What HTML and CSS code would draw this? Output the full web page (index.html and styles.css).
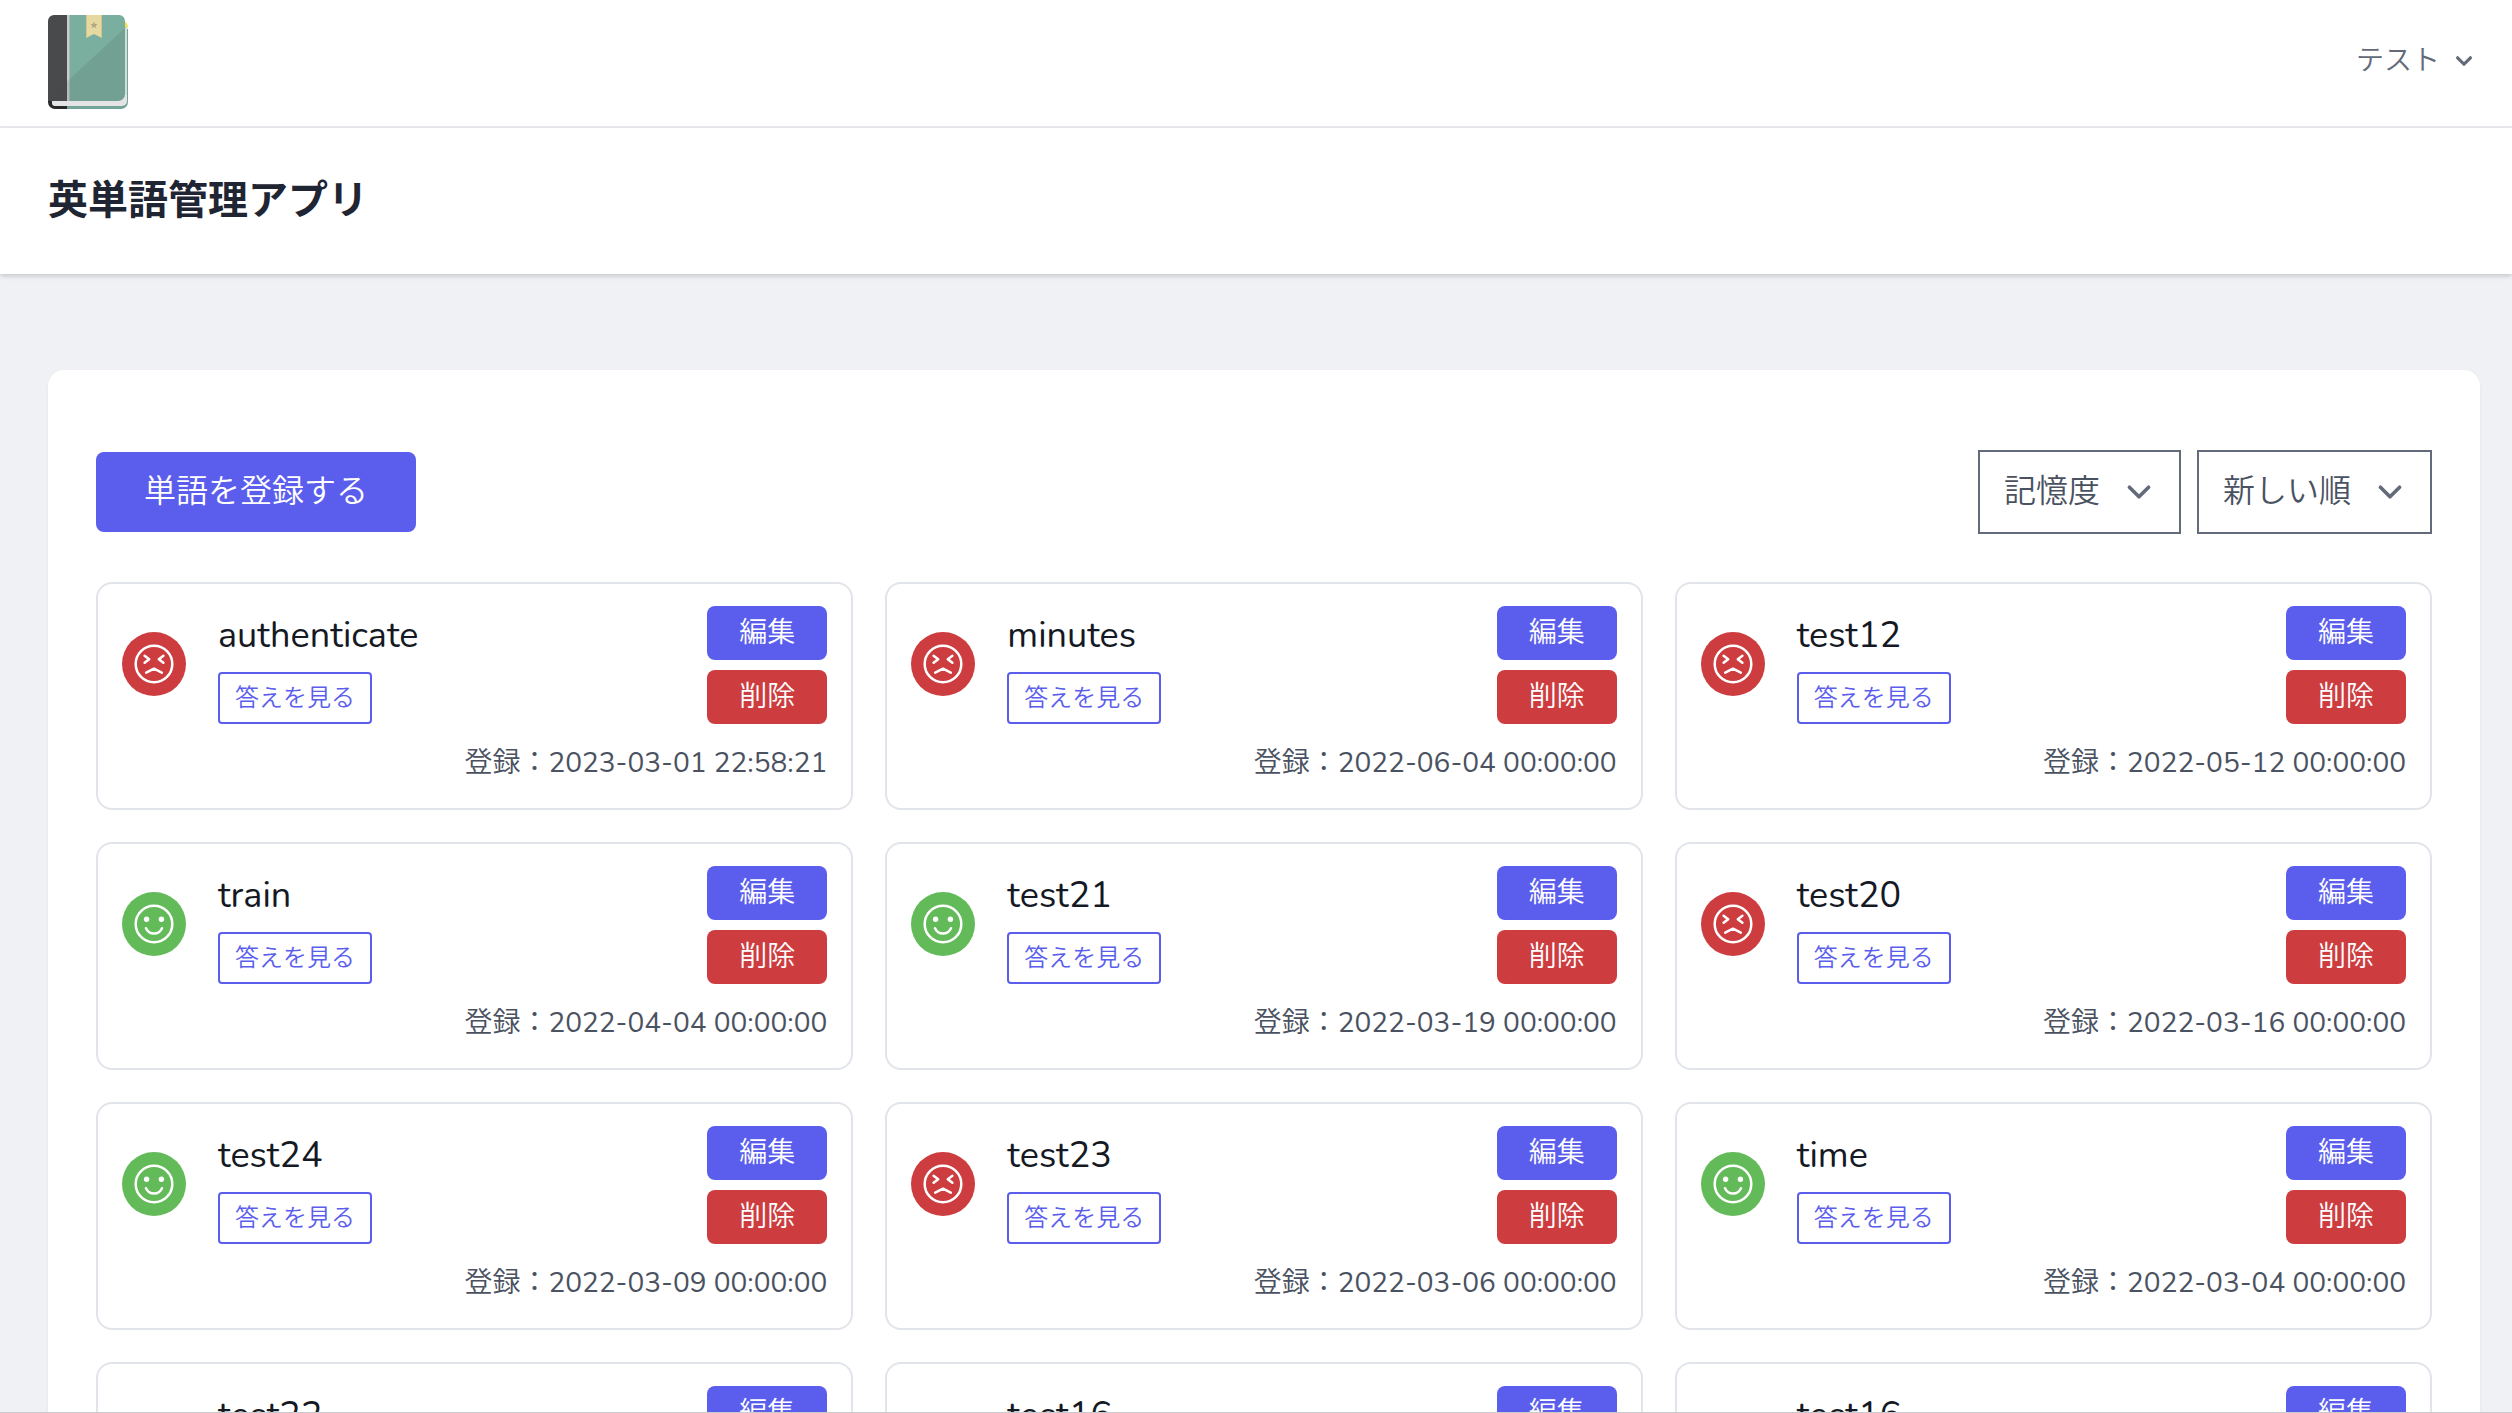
FILE: index.html
```html
<!DOCTYPE html>
<html lang="ja">
<head>
<meta charset="utf-8">
<meta name="viewport" content="width=device-width, initial-scale=1">
<title>英単語管理アプリ</title>
<link rel="stylesheet" href="styles.css">
</head>
<body>
<svg class="sprite" aria-hidden="true">
  <symbol id="face-bad" viewBox="0 0 64 64">
    <circle cx="32" cy="32" r="32" fill="#cd3d3f"/>
    <g fill="none" stroke="#fff" stroke-width="2.5" stroke-linecap="round" stroke-linejoin="round">
      <circle cx="32" cy="32" r="18.3"/>
      <path d="M22.6 23.8l4.6 3.4-4.6 3.6M41.4 23.8l-4.6 3.4 4.6 3.6M24.2 40.6l7.8-3.9 7.8 3.9"/>
    </g>
  </symbol>
  <symbol id="face-good" viewBox="0 0 64 64">
    <circle cx="32" cy="32" r="32" fill="#62bb58"/>
    <g fill="none" stroke="#fff" stroke-width="2.5" stroke-linecap="round">
      <circle cx="32" cy="32" r="18.3"/>
      <path d="M24 36.200c1.600 3.600 4.600 5.400 8 5.400s6.400-1.800 8-5.400"/>
    </g>
    <circle cx="24.600" cy="27.200" r="2.700" fill="#fff"/>
    <circle cx="39.400" cy="27.200" r="2.700" fill="#fff"/>
  </symbol>
  <symbol id="chevron" viewBox="0 0 20 20">
    <path d="M6 8l4 4 4-4" fill="none" stroke="#636a7a" stroke-width="1.5" stroke-linecap="round" stroke-linejoin="round"/>
  </symbol>
</svg>

<nav class="nav">
  <a class="logo" href="#" aria-label="ホーム">
    <svg viewBox="0 0 80 94" width="80" height="94" aria-hidden="true">
      <path d="M76 6q4 2 4 7l-3 1z" fill="#f0e34b"/>
      <path d="M19 14h61v73a7 7 0 0 1-7 7H19z" fill="#74a497"/>
      <path d="M0 80h19v14H7a7 7 0 0 1-7-7z" fill="#282829"/>
      <path d="M4 84V60h75v26a5 5 0 0 1-5 5H7a3 3 0 0 1-3-3z" fill="#e4e4e4"/>
      <path d="M77 12h2v68h-2z" fill="#d3dedb"/>
      <path d="M6 0h13v86H0V6a6 6 0 0 1 6-6z" fill="#494a4c"/>
      <path d="M19 0h3v86h-3z" fill="#cbcbc9"/>
      <path d="M21.500 0H71a6 6 0 0 1 6 6v73a7 7 0 0 1-7 7H21.500z" fill="#7aae9f"/>
      <path d="M77 13v66a7 7 0 0 1-7 7H0v-2z" fill="#414242" fill-opacity=".13"/>
      <path d="M38 0h16v23l-8-4-8 4z" fill="#e5d9a1"/>
      <path d="M38 0h1v22.500l-1 .5zM53 0h1v23l-1-.5z" fill="#cfc58d"/>
      <path d="M46 6.500l1 2.500h2.600l-2 1.700.7 2.600-2.300-1.500-2.300 1.500.7-2.600-2-1.700H45z" fill="#aea583"/>
    </svg>
  </a>
  <button class="user" type="button"><span>テスト</span>
    <svg viewBox="0 0 20 20" width="32" height="32" aria-hidden="true"><path fill="#636a7a" d="M5.293 7.293a1 1 0 011.414 0L10 10.586l3.293-3.293a1 1 0 111.414 1.414l-4 4a1 1 0 01-1.414 0l-4-4a1 1 0 010-1.414z"/></svg>
  </button>
</nav>

<header class="header"><h1>英単語管理アプリ</h1></header>

<main class="main">
  <section class="panel">
    <div class="toolbar">
      <button class="add" type="button">単語を登録する</button>
      <div class="filters">
        <div class="picker">
          <select aria-label="記憶度"><option>記憶度</option></select>
          <svg aria-hidden="true"><use href="#chevron"/></svg>
        </div>
        <div class="picker">
          <select aria-label="並び順"><option>新しい順</option></select>
          <svg aria-hidden="true"><use href="#chevron"/></svg>
        </div>
      </div>
    </div>

    <div class="grid">
      <article class="card">
        <div class="row">
          <svg class="face" role="img" aria-label="苦手"><use href="#face-bad"/></svg>
          <div class="word"><h2>authenticate</h2><button class="answer" type="button">答えを見る</button></div>
          <div class="actions"><button class="edit" type="button">編集</button><button class="delete" type="button">削除</button></div>
        </div>
        <p class="date">登録：<time>2023-03-01 22:58:21</time></p>
      </article>
      <article class="card">
        <div class="row">
          <svg class="face" role="img" aria-label="苦手"><use href="#face-bad"/></svg>
          <div class="word"><h2>minutes</h2><button class="answer" type="button">答えを見る</button></div>
          <div class="actions"><button class="edit" type="button">編集</button><button class="delete" type="button">削除</button></div>
        </div>
        <p class="date">登録：<time>2022-06-04 00:00:00</time></p>
      </article>
      <article class="card">
        <div class="row">
          <svg class="face" role="img" aria-label="苦手"><use href="#face-bad"/></svg>
          <div class="word"><h2>test12</h2><button class="answer" type="button">答えを見る</button></div>
          <div class="actions"><button class="edit" type="button">編集</button><button class="delete" type="button">削除</button></div>
        </div>
        <p class="date">登録：<time>2022-05-12 00:00:00</time></p>
      </article>
      <article class="card">
        <div class="row">
          <svg class="face" role="img" aria-label="得意"><use href="#face-good"/></svg>
          <div class="word"><h2>train</h2><button class="answer" type="button">答えを見る</button></div>
          <div class="actions"><button class="edit" type="button">編集</button><button class="delete" type="button">削除</button></div>
        </div>
        <p class="date">登録：<time>2022-04-04 00:00:00</time></p>
      </article>
      <article class="card">
        <div class="row">
          <svg class="face" role="img" aria-label="得意"><use href="#face-good"/></svg>
          <div class="word"><h2>test21</h2><button class="answer" type="button">答えを見る</button></div>
          <div class="actions"><button class="edit" type="button">編集</button><button class="delete" type="button">削除</button></div>
        </div>
        <p class="date">登録：<time>2022-03-19 00:00:00</time></p>
      </article>
      <article class="card">
        <div class="row">
          <svg class="face" role="img" aria-label="苦手"><use href="#face-bad"/></svg>
          <div class="word"><h2>test20</h2><button class="answer" type="button">答えを見る</button></div>
          <div class="actions"><button class="edit" type="button">編集</button><button class="delete" type="button">削除</button></div>
        </div>
        <p class="date">登録：<time>2022-03-16 00:00:00</time></p>
      </article>
      <article class="card">
        <div class="row">
          <svg class="face" role="img" aria-label="得意"><use href="#face-good"/></svg>
          <div class="word"><h2>test24</h2><button class="answer" type="button">答えを見る</button></div>
          <div class="actions"><button class="edit" type="button">編集</button><button class="delete" type="button">削除</button></div>
        </div>
        <p class="date">登録：<time>2022-03-09 00:00:00</time></p>
      </article>
      <article class="card">
        <div class="row">
          <svg class="face" role="img" aria-label="苦手"><use href="#face-bad"/></svg>
          <div class="word"><h2>test23</h2><button class="answer" type="button">答えを見る</button></div>
          <div class="actions"><button class="edit" type="button">編集</button><button class="delete" type="button">削除</button></div>
        </div>
        <p class="date">登録：<time>2022-03-06 00:00:00</time></p>
      </article>
      <article class="card">
        <div class="row">
          <svg class="face" role="img" aria-label="得意"><use href="#face-good"/></svg>
          <div class="word"><h2>time</h2><button class="answer" type="button">答えを見る</button></div>
          <div class="actions"><button class="edit" type="button">編集</button><button class="delete" type="button">削除</button></div>
        </div>
        <p class="date">登録：<time>2022-03-04 00:00:00</time></p>
      </article>
      <article class="card">
        <div class="row">
          <svg class="face" role="img" aria-label="得意"><use href="#face-good"/></svg>
          <div class="word"><h2>test22</h2></div>
          <div class="actions"><button class="edit" type="button">編集</button></div>
        </div>
      </article>
      <article class="card">
        <div class="row">
          <svg class="face" role="img" aria-label="得意"><use href="#face-good"/></svg>
          <div class="word"><h2>test16</h2></div>
          <div class="actions"><button class="edit" type="button">編集</button></div>
        </div>
      </article>
      <article class="card">
        <div class="row">
          <svg class="face" role="img" aria-label="得意"><use href="#face-good"/></svg>
          <div class="word"><h2>test16</h2></div>
          <div class="actions"><button class="edit" type="button">編集</button></div>
        </div>
      </article>
    </div>
  </section>
</main>
</body>
</html>
```
FILE: styles.css
```css
*, *::before, *::after { box-sizing: border-box; }

body {
  margin: 0;
  height: 100vh;
  overflow: hidden;
  border-bottom: 1px solid #c9cacd;
  background: #eff1f5;
  color: #141923;
  font-family: Nunito, Lato, "Noto Sans CJK JP", sans-serif;
  font-size: 32px;
  line-height: 48px;
}

h1, h2, p { margin: 0; }

button, select {
  margin: 0;
  border: 0;
  background: none;
  color: inherit;
  font: inherit;
  font-weight: 350;
  cursor: pointer;
}

svg { display: block; }

.sprite { display: none; }

.nav {
  display: flex;
  align-items: center;
  justify-content: space-between;
  height: 128px;
  padding: 0 32px 2px 48px;
  border-bottom: 2px solid #ebecf0;
  background: #fff;
}

.user {
  display: flex;
  align-items: center;
  gap: 8px;
  padding: 0 0 2px;
  color: #636a7a;
  font-size: 28px;
  line-height: 40px;
}

.header {
  position: relative;
  padding: 48px 32px 48px 48px;
  background: #fff;
  box-shadow: 0 2px 6px rgba(0, 0, 0, .1), 0 2px 4px rgba(0, 0, 0, .08);
}

.header h1 {
  color: #1f2532;
  font-size: 40px;
  font-weight: 700;
  line-height: 50px;
}

.main { padding: 96px 32px 96px 48px; }

.panel {
  padding: 80px 48px 96px;
  border-radius: 16px;
  background: #fff;
  box-shadow: 0 2px 4px rgba(0, 0, 0, .05);
}

.toolbar {
  display: flex;
  align-items: center;
  justify-content: space-between;
  margin-bottom: 48px;
}

.add {
  padding: 16px 48px;
  border-radius: 8px;
  background: #5b5eed;
  color: #fff;
}

.filters { display: flex; gap: 16px; }

.picker {
  display: grid;
  align-items: center;
  justify-items: end;
}

.picker > * { grid-area: 1 / 1; }

.picker select {
  appearance: none;
  padding: 16px 78px 16px 24px;
  border: 2px solid #636a7a;
  color: #4a5261;
}

.picker svg {
  width: 48px;
  height: 48px;
  margin-right: 18px;
  pointer-events: none;
}

.grid {
  display: grid;
  grid-template-columns: repeat(3, 1fr);
  gap: 32px;
}

.card {
  padding: 22px 24px 24px;
  border: 2px solid #e1e4ea;
  border-radius: 16px;
}

.row {
  display: flex;
  align-items: flex-start;
  gap: 32px;
}

.face {
  width: 64px;
  height: 64px;
  margin-top: 26px;
}

.word {
  display: flex;
  flex: 1;
  flex-direction: column;
  align-items: flex-start;
  gap: 8px;
}

.word h2 {
  padding-top: 2px;
  font-size: 36px;
  font-weight: 400;
  line-height: 56px;
}

.answer {
  padding: 8px 15px;
  border: 2px solid #5b5eed;
  border-radius: 4px;
  color: #5b5eed;
  font-size: 24px;
  line-height: 32px;
}

.actions {
  display: flex;
  flex-direction: column;
  gap: 10px;
}

.edit, .delete {
  padding: 7px 32px;
  border-radius: 8px;
  color: #fff;
  font-size: 28px;
  line-height: 40px;
}

.edit { background: #5b5eed; }
.delete { background: #cd3d3f; }

.date {
  margin-top: 16px;
  padding-top: 2px;
  color: #4a5261;
  font-size: 28px;
  font-weight: 350;
  line-height: 42px;
  text-align: right;
}

.date time { font-weight: 400; }
```
